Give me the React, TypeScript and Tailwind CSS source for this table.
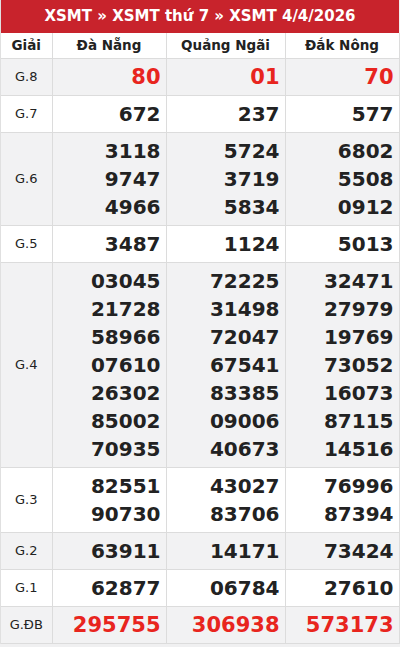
const PROVINCES = ["Đà Nẵng", "Quảng Ngãi", "Đắk Nông"];

type Row = { label: string; values: string[][]; red?: boolean };

const ROWS: Row[] = [
  { label: "G.8", values: [["80"], ["01"], ["70"]], red: true },
  { label: "G.7", values: [["672"], ["237"], ["577"]] },
  {
    label: "G.6",
    values: [
      ["3118", "9747", "4966"],
      ["5724", "3719", "5834"],
      ["6802", "5508", "0912"],
    ],
  },
  { label: "G.5", values: [["3487"], ["1124"], ["5013"]] },
  {
    label: "G.4",
    values: [
      ["03045", "21728", "58966", "07610", "26302", "85002", "70935"],
      ["72225", "31498", "72047", "67541", "83385", "09006", "40673"],
      ["32471", "27979", "19769", "73052", "16073", "87115", "14516"],
    ],
  },
  {
    label: "G.3",
    values: [
      ["82551", "90730"],
      ["43027", "83706"],
      ["76996", "87394"],
    ],
  },
  { label: "G.2", values: [["63911"], ["14171"], ["73424"]] },
  { label: "G.1", values: [["62877"], ["06784"], ["27610"]] },
  { label: "G.ĐB", values: [["295755"], ["306938"], ["573173"]], red: true },
];

export default function App() {
  return (
    <div
      className="w-[400px] h-[647px] bg-[#f0f0f1] text-[#222]"
      style={{ fontFamily: '"DejaVu Sans", sans-serif' }}
    >
      <div className="w-[399px] border-l border-[#e0e0e0] bg-white">
        <div className="h-[33px] flex items-center justify-center bg-[#c8232c] text-white font-bold text-[15px]">
          XSMT » XSMT thứ 7 » XSMT 4/4/2026
        </div>
        <table className="w-[398px] border-collapse table-fixed">
          <colgroup>
            <col className="w-[51px]" />
            <col className="w-[114px]" />
            <col className="w-[119px]" />
            <col className="w-[114px]" />
          </colgroup>
          <thead>
            <tr className="h-[25px] bg-white">
              <th className="border border-[#dcdcdc] border-t-0 border-l-0 text-[13.5px] font-bold">
                Giải
              </th>
              {PROVINCES.map((p) => (
                <th
                  key={p}
                  className="border border-[#dcdcdc] border-t-0 text-[13.5px] font-bold"
                >
                  {p}
                </th>
              ))}
            </tr>
          </thead>
          <tbody>
            {ROWS.map((row, i) => (
              <tr
                key={row.label}
                className={i % 2 === 0 ? "bg-[#f2f2f3]" : "bg-white"}
              >
                <td className="border border-[#dcdcdc] border-l-0 text-center text-[13px]">
                  {row.label}
                </td>
                {row.values.map((vals, j) => (
                  <td
                    key={j}
                    className={`border border-[#dcdcdc] text-right pr-[5px] py-[4px] leading-[28px] font-bold ${
                      row.red ? "text-[#e8251e] text-[21px]" : "text-[#222] text-[20px]"
                    }`}
                  >
                    {vals.map((v) => (
                      <div key={v}>{v}</div>
                    ))}
                  </td>
                ))}
              </tr>
            ))}
          </tbody>
        </table>
      </div>
    </div>
  );
}
